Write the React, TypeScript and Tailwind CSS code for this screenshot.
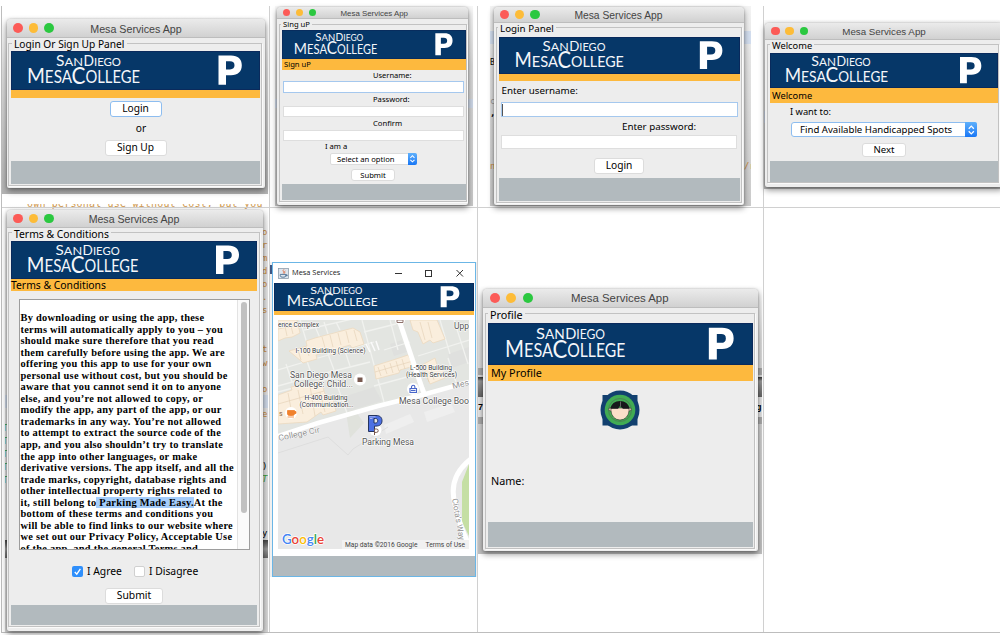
import React from "react";

const LUCIDA = "font-['Noto_Sans','Open_Sans',sans-serif]";

function Banner({ className }: { className: string }) {
  return (
    <svg viewBox="0 0 249 39" preserveAspectRatio="none" className={`block shrink-0 ${className}`}>
      <rect width="249" height="39" fill="#063768" />
      <rect x="0.5" y="0.5" width="248" height="38" fill="none" stroke="#0a2a5c" strokeWidth="1" />
      <g fill="#f4f6fa" fontFamily="Lato, sans-serif">
        <text x="45" y="14.800" fontSize="14.500" textLength="27" lengthAdjust="spacingAndGlyphs">
          S<tspan fontSize="12">AN</tspan>
        </text>
        <text x="72.500" y="14.800" fontSize="14.500" textLength="37.500" lengthAdjust="spacingAndGlyphs">
          D<tspan fontSize="12">IEGO</tspan>
        </text>
        <text x="16" y="32" fontSize="21.500" textLength="45" lengthAdjust="spacingAndGlyphs">
          M<tspan fontSize="17">ESA</tspan>
        </text>
        <text x="60.500" y="32.600" fontSize="24" textLength="68.500" lengthAdjust="spacingAndGlyphs">
          C<tspan fontSize="17" dy="-0.800">OLLEGE</tspan>
        </text>
      </g>
      <path
        fillRule="evenodd"
        fill="#fff"
        d="M207.5 4.500H220c7 0 10.800 3.500 10.800 9.700S227 24.200 220 24.200H215V33.800H207.500ZM215 10.300V18.400H219c3 0 4.500-1.300 4.500-4.100s-1.500-4-4.500-4Z"
      />
    </svg>
  );
}

type WindowProps = {
  frame: string;
  bar: string;
  lights: string;
  dot: string;
  title: string;
  children: React.ReactNode;
};

function MacWindow({ frame, bar, lights, dot, title, children }: WindowProps) {
  return (
    <section
      className={`absolute flex flex-col rounded-t-[4px] rounded-b-[2px] bg-[#ededed] text-black shadow-[0_0_2px_rgba(0,0,0,0.25),0_3px_6px_rgba(0,0,0,0.45)] ${LUCIDA} ${frame}`}
    >
      <header
        className={`flex shrink-0 items-center rounded-t-[4px] border-b border-[#bdbdbd] bg-linear-to-b from-[#ebebeb] to-[#d1d1d1] ${bar}`}
      >
        <div className={`flex w-0 ${lights}`}>
          <i className={`shrink-0 rounded-full bg-[#fc5b57] ${dot}`} />
          <i className={`shrink-0 rounded-full bg-[#fdbc38] ${dot}`} />
          <i className={`shrink-0 rounded-full bg-[#2bc840] ${dot}`} />
        </div>
        <h1
          className={`flex-1 pt-[2px] text-center font-['Liberation_Sans',sans-serif] whitespace-nowrap text-[#444] ${title}`}
        >
          Mesa Services App
        </h1>
      </header>
      {children}
    </section>
  );
}

function Group({
  className,
  legend,
  legendClass,
  children,
}: {
  className: string;
  legend: string;
  legendClass: string;
  children: React.ReactNode;
}) {
  return (
    <div
      className={`flex shrink-0 flex-col border border-[#c2c2c2] shadow-[1px_1px_0_#fafafa] ${className}`}
    >
      <h2 className={`w-fit shrink-0 bg-[#ededed] px-[2px] whitespace-nowrap ${legendClass}`}>{legend}</h2>
      {children}
    </div>
  );
}

function Button({ className, children }: { className: string; children: React.ReactNode }) {
  return (
    <button
      className={`flex shrink-0 items-center justify-center self-center rounded-[3px] border bg-white ${className}`}
    >
      {children}
    </button>
  );
}

function Stepper({ className }: { className: string }) {
  return (
    <span
      className={`flex shrink-0 items-center justify-center rounded-r-[2px] bg-linear-to-b from-[#5fb0fb] to-[#1676f5] ${className}`}
    >
      <svg viewBox="0 0 10 14" className="h-[80%]" fill="none" stroke="#fff" strokeWidth="1.5">
        <path d="M2 5.500L5 2.500L8 5.500M2 8.500L5 11.500L8 8.500" />
      </svg>
    </span>
  );
}

function LoginOrSignUp() {
  return (
    <MacWindow
      frame="left-[7px] top-[19px] h-[169px] w-[258px]"
      bar="h-[19px] text-[10.7px]"
      lights="gap-[6px] ml-[6px]"
      dot="size-[9.5px]"
      title="pr-[6px]"
    >
      <Group
        className="mt-[5px] ml-px h-[143px] w-[254px] text-[10.2px]"
        legend="Login Or Sign Up Panel"
        legendClass="-mt-[6px] ml-[3px] h-[12px] leading-[12px]"
      >
        <div className="mt-px ml-[2px] flex w-[249px] flex-col">
          <Banner className="h-[39px] w-full" />
          <div className="h-[8px] bg-[#fdb93e]" />
          <Button className="mt-[3px] h-[16px] w-[52px] border-[#8dbdf0]">Login</Button>
          <p className="mt-[5px] ml-[11px] h-[12px] text-center leading-[12px]">or</p>
          <Button className="mt-[6px] h-[16px] w-[62px] border-[#dcdcdc]">Sign Up</Button>
          <div className="mt-[5px] h-[23px] bg-[#b2babe]" />
        </div>
      </Group>
    </MacWindow>
  );
}

function SignUp() {
  return (
    <MacWindow
      frame="left-[277px] top-[7px] h-[198px] w-[191px]"
      bar="h-[12px] text-[7.9px]"
      lights="gap-[5.700px] ml-[5.500px]"
      dot="size-[7.400px]"
      title="pr-[2px]"
    >
      <Group
        className="mt-[5px] ml-[2px] h-[178px] w-[188px] text-[7.650px] leading-[9px]"
        legend="Sing uP"
        legendClass="-mt-[5px] ml-px h-[9px]"
      >
        <div className="mt-px ml-[2px] flex w-[184px] flex-col">
          <Banner className="h-[29px] w-full" />
          <div className="h-[11px] bg-[#fdb93e] pl-[2px] leading-[11px]">Sign uP</div>
          <label className="mt-px ml-[91px] h-[9px] text-[7.500px]">Username:</label>
          <div className="mt-px ml-px h-[12px] w-[181px] border border-[#a5c8ee] bg-white" />
          <label className="mt-[2px] ml-[91px] h-[9px]">Password:</label>
          <div className="mt-[2px] ml-px h-[11px] w-[181px] border border-[#dedede] bg-white" />
          <label className="mt-[2px] ml-[91px] h-[9px]">Confirm</label>
          <div className="mt-[2px] ml-px h-[11px] w-[181px] border border-[#dedede] bg-white" />
          <label className="mt-px ml-[43px] h-[9px]">I am a</label>
          <div className="mt-[2px] ml-[48px] flex h-[12px] w-[87px] items-center rounded-[2px] border border-[#dcdcdc] bg-white">
            <span className="flex-1 pl-[6px]">Select an option</span>
            <Stepper className="-my-px -mr-px h-[12px] w-[9.500px]" />
          </div>
          <Button className="mt-[4px] mr-[2px] h-[12px] w-[44px] border-[#dcdcdc]">Submit</Button>
          <div className="mt-[3px] h-[16px] bg-[#b2babe]" />
        </div>
      </Group>
    </MacWindow>
  );
}

function Login() {
  return (
    <MacWindow
      frame="left-[494px] top-[7px] h-[198px] w-[250px]"
      bar="h-[16px] text-[10.3px]"
      lights="gap-[6px] ml-[6px]"
      dot="size-[9.200px]"
      title="pr-[7px]"
    >
      <Group
        className="mt-[4px] ml-[2px] h-[176px] w-[246px] text-[9.800px]"
        legend="Login Panel"
        legendClass="-mt-[5px] ml-px h-[12px] leading-[12px]"
      >
        <div className="mt-[2px] ml-[2px] flex w-[241px] flex-col">
          <Banner className="h-[37px] w-full" />
          <div className="h-[7px] bg-[#fdb93e]" />
          <label className="mt-[4px] ml-[2.500px] h-[12px] leading-[12px]">Enter username:</label>
          <div className="mt-[5px] ml-[2px] flex h-[15px] w-[237px] items-center border border-[#a5c8ee] bg-white">
            <i className="h-[12px] w-px bg-[#555]" />
          </div>
          <label className="mt-[3px] ml-[123px] h-[13px] leading-[13px]">Enter password:</label>
          <div className="mt-[2px] ml-[2px] h-[14px] w-[236px] border border-[#dedede] bg-white" />
          <Button className="mt-[9px] mr-px h-[16px] w-[50px] border-[#dcdcdc] text-[10.200px]">Login</Button>
          <div className="mt-[4px] h-[23px] bg-[#b2babe]" />
        </div>
      </Group>
    </MacWindow>
  );
}

function Welcome() {
  return (
    <MacWindow
      frame="left-[765px] top-[23px] h-[164px] w-[238px]"
      bar="h-[17px] text-[9.750px]"
      lights="gap-[5.500px] ml-[6px] -mr-[6px]"
      dot="size-[8.800px]"
      title=""
    >
      <Group
        className="mt-[4px] ml-[2px] h-[139px] w-[232px] text-[9.300px]"
        legend="Welcome"
        legendClass="-mt-[5px] ml-[2px] h-[12px] leading-[12px]"
      >
        <div className="mt-px ml-[2px] flex w-[228px] flex-col">
          <Banner className="h-[35px] w-full" />
          <div className="h-[15px] bg-[#fdb93e] pl-[2px] leading-[15px]">Welcome</div>
          <label className="mt-[3px] ml-[20px] h-[12px] leading-[12px]">I want to:</label>
          <div className="mt-[4px] ml-[21px] flex h-[15px] w-[186px] items-center rounded-[3px] border border-[#8dbdf0] bg-white">
            <span className="flex-1 pl-[8px] text-[9.600px] leading-[13px] whitespace-nowrap">
              Find Available Handicapped Spots
            </span>
            <Stepper className="-my-px -mr-px h-[15px] w-[12px]" />
          </div>
          <Button className="mt-[6px] h-[14px] w-[44px] border-[#dcdcdc] text-[9.600px]">Next</Button>
          <div className="mt-[4px] h-[21px] bg-[#b2babe]" />
        </div>
      </Group>
    </MacWindow>
  );
}

const TERMS_BEFORE = [
  "By downloading or using the app, these",
  "terms will automatically apply to you – you",
  "should make sure therefore that you read",
  "them carefully before using the app. We are",
  "offering you this app to use for your own",
  "personal use without cost, but you should be",
  "aware that you cannot send it on to anyone",
  "else, and you’re not allowed to copy, or",
  "modify the app, any part of the app, or our",
  "trademarks in any way. You’re not allowed",
  "to attempt to extract the source code of the",
  "app, and you also shouldn’t try to translate",
  "the app into other languages, or make",
  "derivative versions. The app itself, and all the",
  "trade marks, copyright, database rights and",
  "other intellectual property rights related to",
];

const TERMS_AFTER = [
  "bottom of these terms and conditions you",
  "will be able to find links to our website where",
  "we set out our Privacy Policy, Acceptable Use",
  "of the app, and the general Terms and",
];

function Terms() {
  return (
    <MacWindow
      frame="left-[7px] top-[210px] h-[421px] w-[256px]"
      bar="h-[18px] text-[10.600px]"
      lights="gap-[6px] ml-[6px]"
      dot="size-[9.500px]"
      title="pr-[8px]"
    >
      <Group
        className="mt-[4px] ml-px h-[395px] w-[252px] text-[10.350px]"
        legend="Terms & Conditions"
        legendClass="-mt-[5px] ml-[3px] h-[12px] leading-[12px]"
      >
        <div className="mt-px ml-[2px] flex w-[246px] flex-col">
          <Banner className="h-[38px] w-full" />
          <div className="h-[12px] bg-[#fdb93e] leading-[13px]">Terms &amp; Conditions</div>
          <div className="mt-[8px] ml-[8px] flex h-[251px] w-[231px] overflow-hidden border border-[#9d9d9d] bg-white">
            <div className="w-[217px] shrink-0 pt-[12px] pl-[0.500px] font-['Liberation_Serif',serif] text-[10.400px] leading-[11.550px] font-bold tracking-[0.260px] whitespace-nowrap">
              {TERMS_BEFORE.map((line) => (
                <p key={line}>{line}</p>
              ))}
              <p>
                it, still belong to<mark className="bg-[#a5cdfb] text-black"> Parking Made Easy.</mark>At the
              </p>
              {TERMS_AFTER.map((line) => (
                <p key={line}>{line}</p>
              ))}
            </div>
            <div className="flex flex-1 justify-center border-l border-[#e3e3e3] bg-[#fafafa] pt-[2px]">
              <i className="h-[211px] w-[6px] rounded-full bg-[#c1c1c1]" />
            </div>
          </div>
          <div className="mt-[16px] ml-[61px] flex h-[11px] items-center">
            <span className="flex size-[11px] items-center justify-center rounded-[2px] bg-[#2f8ffb]">
              <svg viewBox="0 0 10 10" className="size-[9px]" fill="none" stroke="#fff" strokeWidth="1.500">
                <path d="M2 5.500L4.200 8L8.200 2" />
              </svg>
            </span>
            <span className="w-[51px] pl-[4px]">I Agree</span>
            <span className="size-[11px] rounded-[2px] border border-[#d0d0d0] bg-white" />
            <span className="pl-[4px]">I Disagree</span>
          </div>
          <Button className="mt-[11px] h-[16px] w-[58px] border-[#dcdcdc]">Submit</Button>
          <div className="mt-px h-[20px] bg-[#b2babe]" />
        </div>
      </Group>
    </MacWindow>
  );
}

function Avatar() {
  return (
    <svg viewBox="0 0 40 40" className="-ml-px size-[40px]">
      <circle cx="20" cy="20" r="19.500" fill="#12406f" />
      <rect x="2.500" y="5" width="35" height="30.500" fill="#12406f" />
      <circle cx="20" cy="20" r="15.300" fill="#41ab53" />
      <circle cx="20" cy="20" r="11.500" fill="none" stroke="#4e6f55" strokeWidth="0.700" />
      <circle cx="10.500" cy="19.300" r="1.600" fill="#f9dcc6" stroke="#333" strokeWidth="0.600" />
      <circle cx="29.500" cy="19.300" r="1.600" fill="#f9dcc6" stroke="#333" strokeWidth="0.600" />
      <path d="M11 18h18v2.500a9 9.500 0 0 1-18 0Z" fill="#fadfc9" stroke="#333" strokeWidth="0.600" />
      <path d="M10.500 18.800C11 14 15 11 20 11s9 3 9.500 7.800h-6.500L20 16l-2 2.800Z" fill="#17181a" />
      <path d="M20.500 11.500v5" stroke="#777" strokeWidth="0.800" />
    </svg>
  );
}

function Profile() {
  return (
    <MacWindow
      frame="left-[483px] top-[289px] h-[262px] w-[275px]"
      bar="h-[19px] text-[11.400px]"
      lights="gap-[6.500px] ml-[6.500px]"
      dot="size-[10px]"
      title="pr-[8px]"
    >
      <Group
        className="mt-[5px] ml-[2px] h-[236px] w-[270px] text-[10.800px]"
        legend="Profile"
        legendClass="-mt-[5px] ml-[2px] h-[14px] leading-[12px]"
      >
        <div className="ml-[2px] flex w-[265px] flex-col">
          <Banner className="h-[42px] w-full" />
          <div className="h-[16px] bg-[#fdb93e] pl-[3px] leading-[16px]">My Profile</div>
          <div className="mt-[9px] flex h-[40px] justify-center">
            <Avatar />
          </div>
          <p className="mt-[44px] ml-[3px] h-[14px] leading-[14px]">Name:</p>
          <div className="mt-[34px] h-[25px] bg-[#b2babe]" />
        </div>
      </Group>
    </MacWindow>
  );
}

function CampusMap() {
  return (
    <svg viewBox="0 0 191 229" className="block h-[229px] w-[191px]" fontFamily="Roboto, sans-serif">
      <rect width="191" height="229" fill="#e8e8e8" />
      <path d="M0 0H191V62L144 75L40 103L0 117Z" fill="#e3e5e1" />
      <path d="M68 92l8-3 10 14-14 15z" fill="#e0e2dc" />
      <path d="M62 78l34-11 8 14-34 10zM112 24l12-4 5 12-13 4zM170 34l21-7v15l-17 6z" fill="#dfe0de" />
      <g fill="none" stroke="#f1f2ef" strokeWidth="1.300">
        <path d="M0 50L40 38L96 22M22 0L34 40M0 66L36 56L92 42M26 10L88 -4M84 0L106 82M86 12L118 4M106 30L132 22M140 36L191 20M96 66L140 54M0 72L60 56M162 0L172 34M8 44L14 62M28 38L34 56M50 34L56 50M66 28L72 46M176 0L190 44M58 62L70 96M170 38L178 62M58 2L62 10M36 4L42 18M46 2L50 14M112 0L120 30" />
      </g>
      <g fill="#faeedd" stroke="#ecd9bf" strokeWidth="0.800">
        <path d="M0 0H19l3 13-8 4-7 1-7 3z" />
        <path d="M11 31l18-5-1-5 9-3 38-10 7 4 4 12-12 4-2-3-10 3 1 4-10 3-1-4-14 4 1 4-14 4-2-2z" />
        <path d="M96 46l22-7 12-4 6 11-14 4-1 3-23 6z" />
        <path d="M132 0h27l8 19-12 4-3-3-7 4-5-12-5-2z" />
        <path d="M144 45l13-7 3 10 4-1 3 11-15 6z" />
        <path d="M0 75l14-5-1-3 30-6 4 13 8 5 3 12-13 4-2-3-14 10-29 2z" />
      </g>
      <g stroke="#e3cfb3" strokeWidth="0.600">
        <path d="M20 30l3 10M28 27l3 9M44 17l4 14M52 15l3 12M60 13l3 12M68 11l3 12M76 10l3 11M100 47l3 9M106 45l3 9M112 43l3 10M118 41l3 10M124 39l3 10M97 52l38-11M142 2l5 18M150 2l4 16M146 48l5 14M152 46l4 14M10 73l5 26M20 70l5 24M32 66l5 30M42 72l5 20M0 84l46-13M6 2l3 14M12 2l3 12M0 9l20-4" />
      </g>
      <path d="M121 0L144 68L147 76" stroke="#fff" strokeWidth="5" fill="none" />
      <path d="M0 116L40 103L100 86L144 75L191 62" stroke="#fff" strokeWidth="4.500" fill="none" />
      <path d="M106 105l26-11 4 8-28 12zM146 92l27-9 4 9-28 10z" fill="#efefef" />
      <path d="M0 133l50-16 20 18 5-6 35-22" stroke="#dedede" fill="none" />
      <path d="M191 144v72l-7-14v-40z" fill="#c5dfa4" />
      <path d="M194 138C178 150 172 166 177 184C181 202 186 216 191 224" stroke="#fff" strokeWidth="5" fill="none" />
      <g stroke="#fafafa" strokeWidth="1.500">
        <path d="M88 24l4 8M93 22l4 9M98 21l3 9" />
      </g>
      <g fill="#3a3a3a" stroke="#fff" strokeWidth="1.200" paintOrder="stroke" strokeLinejoin="round" fontSize="6.500">
        <text x="0" y="6.500" textLength="41" lengthAdjust="spacingAndGlyphs">ence Complex</text>
        <text x="17.500" y="32.500" textLength="70" lengthAdjust="spacingAndGlyphs">I-100 Building (Science)</text>
        <text x="132" y="49.500" textLength="42" lengthAdjust="spacingAndGlyphs">L-500 Building</text>
        <text x="128" y="56.800" textLength="51" lengthAdjust="spacingAndGlyphs">(Health Services)</text>
        <text x="26.500" y="79.500" textLength="43" lengthAdjust="spacingAndGlyphs">H-400 Building</text>
        <text x="21.500" y="86.800" textLength="54" lengthAdjust="spacingAndGlyphs">(Communication...</text>
        <g fontSize="8.300" fill="#555">
          <text x="176" y="8.500" textLength="15" lengthAdjust="spacingAndGlyphs">Upp</text>
          <text x="12" y="58" textLength="62" lengthAdjust="spacingAndGlyphs">San Diego Mesa</text>
          <text x="16" y="66.500" textLength="59" lengthAdjust="spacingAndGlyphs">College: Child...</text>
          <text x="121" y="83.500" textLength="70" lengthAdjust="spacingAndGlyphs">Mesa College Boo</text>
          <text x="84" y="124.500" textLength="52" lengthAdjust="spacingAndGlyphs">Parking Mesa</text>
        </g>
        <g fontSize="8.300" fill="#929292" strokeWidth="0.800">
          <text x="1" y="121" textLength="42" lengthAdjust="spacingAndGlyphs" transform="rotate(-12 1 121)">College Cir</text>
          <text x="175" y="69" textLength="17" lengthAdjust="spacingAndGlyphs" transform="rotate(-14 175 69)">Mes</text>
          <text x="174" y="179" textLength="42" lengthAdjust="spacingAndGlyphs" transform="rotate(80 174 179)">Ciota’s Way</text>
        </g>
      </g>
      <circle cx="122" cy="0" r="5" fill="#fff" />
      <path d="M119 0h6v2.500h-6z" fill="none" stroke="#8d716a" />
      <circle cx="82" cy="59.500" r="6" fill="#fff" />
      <rect x="79.500" y="57.500" width="5" height="4.500" fill="#78594f" />
      <circle cx="135" cy="69" r="6" fill="#fff" />
      <path d="M132 68.500h6.500v4H132zM133.500 68.500v-1.500a1.700 1.700 0 0 1 3.400 0v1.500" fill="none" stroke="#4966c9" strokeWidth="1.100" />
      <path d="M133 70.500h4.500" stroke="#4966c9" strokeWidth="1.200" />
      <circle cx="13" cy="93" r="6" fill="#fff" />
      <path d="M9.500 90.500h7v3.500a2 2 0 0 1-2 1.500h-3a2 2 0 0 1-2-1.500zM9.500 97h6.500M16.500 91.500h1.500v2h-1.500" fill="#f0812d" stroke="#f0812d" strokeWidth="0.800" />
      <text x="1" y="96" fontSize="7" fill="#8d6a4a">s</text>
      <circle cx="97.500" cy="110" r="6" fill="#fff" />
      <path
        fillRule="evenodd"
        d="M90.500 95.500h7.500c4 0 6 2 6 5.200s-2 5.400-6 5.400h-1.500v5.400h-6zM96 98.500v4.500h1.400c1.500 0 2.300-.8 2.300-2.300s-.8-2.200-2.300-2.200z"
        fill="#4d70e3"
        stroke="#25345f"
        strokeWidth="1"
      />
      <path d="M91.500 96.800h6M92 98.500h2.500" stroke="#a8b7f2" strokeWidth="1" />
      <path d="M96.500 115v-6h2a1.700 1.700 0 0 1 0 3.400h-2" stroke="#78594f" strokeWidth="1" fill="none" />
      <rect x="64" y="220" width="127" height="9" fill="#f1f1f1" />
      <g fontSize="6.300" fill="#444">
        <text x="67" y="226.500" textLength="72.500" lengthAdjust="spacingAndGlyphs">Map data ©2016 Google</text>
        <text x="147.500" y="226.500" textLength="39.500" lengthAdjust="spacingAndGlyphs">Terms of Use</text>
      </g>
      <g fontFamily="Lato, sans-serif" fontSize="13.500" fontWeight="600" stroke="#fff" strokeWidth="1.500" paintOrder="stroke">
        <text x="4" y="224" textLength="42" lengthAdjust="spacingAndGlyphs">
          <tspan fill="#4285f4">G</tspan>
          <tspan fill="#ea4335">o</tspan>
          <tspan fill="#fbbc05">o</tspan>
          <tspan fill="#4285f4">g</tspan>
          <tspan fill="#34a853">l</tspan>
          <tspan fill="#ea4335">e</tspan>
        </text>
      </g>
    </svg>
  );
}

function MapWindow() {
  return (
    <section className="absolute top-[262px] left-[272px] flex h-[315px] w-[204px] flex-col border border-[#6bb6e6] bg-white">
      <header className="flex h-[20px] shrink-0 items-center pl-[5px]">
        <svg viewBox="0 0 12 12" className="size-[11px]">
          <rect x="0.500" y="0.500" width="11" height="11" fill="#dce5ee" stroke="#8796a5" strokeWidth="0.800" />
          <path d="M6.500 1.500c-2.500 2 1 2.500-.8 4.500M8 3C6.500 4 8 5 7 6" stroke="#df6a3f" fill="none" />
          <path d="M2.500 7h6v1.500a2 2 0 0 1-2 1.500h-2a2 2 0 0 1-2-1.500zM8.500 7.500h1.500v1H8.500" stroke="#3f6489" fill="none" strokeWidth="0.900" />
        </svg>
        <h1 className="flex-1 pl-[3px] font-['Open_Sans',sans-serif] text-[7.400px] whitespace-nowrap text-[#222]">
          Mesa Services
        </h1>
        <svg viewBox="0 0 70 10" className="mr-[11px] h-[10px] w-[70px]" fill="none" stroke="#333" strokeWidth="1">
          <path d="M1 5.500h7M62.500 2L69 8.500M69 2L62.500 8.500" />
          <rect x="31.500" y="2.500" width="6" height="6" />
        </svg>
      </header>
      <Banner className="mx-px h-[28px] w-[200px]" />
      <div className="mx-px h-[4px] shrink-0 bg-[#fdb93e]" />
      <div className="mt-[5px] ml-[5px] h-[229px] w-[191px] shrink-0">
        <CampusMap />
      </div>
      <div className="mt-[7px] flex-1 bg-[#b2babe]" />
    </section>
  );
}

const RIGHT_CODE: [string, string][] = [
  ["o", "top-[22px]"],
  ["r", "top-[35px]"],
  ["m", "top-[48px]"],
  ["d", "top-[61px]"],
  ["o", "top-[74px]"],
  [".", "top-[87px]"],
  ["s", "top-[100px]"],
  ["t", "top-[139px]"],
  ["w", "top-[153px]"],
  ["o", "top-[179px]"],
  ["e", "top-[204px]"],
];

const LEFT_CODE = ["top-[218px]", "top-[231px]", "top-[244px]", "top-[257px]", "top-[270px]"];

function Backdrops() {
  return (
    <div className="font-['DejaVu_Sans_Mono',monospace] text-[9px] leading-[12px]">
      <div className="absolute top-[15px] left-[2px] h-[179px] w-[266px] bg-linear-to-b from-white via-[#dedede] via-30% to-[#b4b4b4]" />

      <div className="absolute top-[6px] left-[275px] h-[200px] w-[198px] bg-linear-to-b from-[#f8f8f8] via-[#d9d9d9] via-30% to-[#c9c9c9]">
        <div className="mt-[93px] h-[9px] bg-[#ccd6e6]" />
      </div>

      <div className="absolute top-[6px] left-[490px] h-[200px] w-[261px] overflow-hidden bg-linear-to-b from-[#f4f4f4] via-[#e4e4e4] via-30% to-[#cccccc]">
        <div className="mt-[25px] h-[13px] bg-[#d3deef]" />
        <span className="absolute top-[51px] left-0 text-[8px]">B</span>
        <span className="absolute top-[89px] left-0 text-[#999]">c</span>
        <span className="absolute top-[101px] left-0 font-bold">,</span>
        <span className="absolute top-[154px] left-0 text-[#c98a3c]">n</span>
        <span className="absolute top-[154px] left-[254px] text-[#c98a3c]">/r</span>
      </div>

      <div className="absolute top-[20px] left-[764px] h-[169px] w-[236px] overflow-hidden bg-linear-to-b from-[#fafafa] via-[#e4e4e4] via-30% to-[#bcbcbc]">
        <div className="mt-[91px] h-[12px] bg-[#cbd5e6]" />
      </div>

      <div className="absolute top-[204px] left-[5px] h-[428px] w-[263px] overflow-hidden bg-linear-to-b from-white via-[#e6e6e6] via-10% to-[#d6d6d6]">
        <div className="mt-[191px] h-[13px] bg-[#cdd7e6]" />
        <div className="mt-[132px] h-[18px] bg-linear-to-b from-[#444] via-[#999] to-[#666]" />
        <span className="absolute -top-[6px] left-[22px] text-[10px] tracking-[0.180px] whitespace-nowrap text-[#d19a50]">
          own personal use without cost, but you
        </span>
        {RIGHT_CODE.map(([char, top]) => (
          <span key={top} className={`absolute left-[257px] text-[#c98a3c] ${top}`}>
            {char}
          </span>
        ))}
        {LEFT_CODE.map((top) => (
          <span key={top} className={`absolute -left-[3px] text-[#3da03d] ${top}`}>
            T
          </span>
        ))}
        <span className="absolute top-[256px] left-[257px]">)</span>
        <span className="absolute top-[269px] left-[257px] text-[#3da03d] italic">T</span>
        <span className="absolute top-[323px] left-[257px]">y</span>
      </div>

      <div className="absolute top-[262px] left-[270px] h-[315px] w-[207px] bg-[#f0f0f0]">
        <div className="mt-[3px] h-[9px] w-[3px] bg-[#3d5682]" />
      </div>

      <div className="absolute top-[285px] left-[478px] h-[269px] w-[284px] overflow-hidden bg-linear-to-b from-white via-[#dddddd] via-20% to-[#c2c2c2]">
        <div className="mt-[83px] h-[7px] bg-[#a8a8a8]" />
        <div className="mt-[2px] h-[20px] bg-linear-to-b from-[#333] via-[#999] via-20% to-[#666]" />
        <div className="h-[20px] bg-[#e6e6e6]" />
        <div className="h-[7px] bg-[#aaaaaa]" />
        <span className="absolute top-[116px] left-0 font-['Liberation_Sans',sans-serif] font-bold">7</span>
        <span className="absolute top-[116px] left-[278px] font-['Liberation_Sans',sans-serif] font-bold">g</span>
      </div>
    </div>
  );
}

export default function App() {
  return (
    <main className="relative h-[635px] w-[1000px] overflow-hidden bg-white">
      <Backdrops />
      <div className="absolute top-[6px] left-px grid h-[627px] w-[999px] grid-cols-[268px_208px_286px_1fr] grid-rows-[202px_1fr] border-b border-l border-[#bdbdbd]">
        <div className="border-r border-b border-[#d0d0d0]" />
        <div className="border-r border-b border-[#d0d0d0]" />
        <div className="border-r border-b border-[#d0d0d0]" />
        <div className="border-b border-[#d0d0d0]" />
        <div className="border-r border-[#d0d0d0]" />
        <div className="border-r border-[#d0d0d0]" />
        <div className="border-r border-[#d0d0d0]" />
        <div />
      </div>
      <LoginOrSignUp />
      <SignUp />
      <Login />
      <Welcome />
      <Terms />
      <MapWindow />
      <Profile />
    </main>
  );
}
